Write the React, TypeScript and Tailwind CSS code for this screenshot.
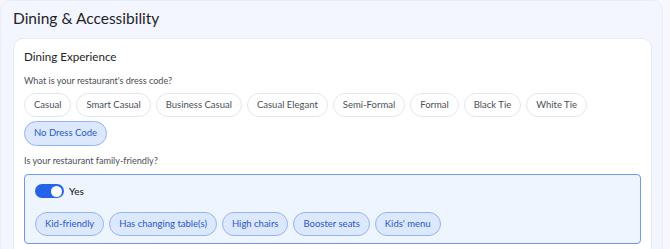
import React from "react";

const dress = ["Casual", "Smart Casual", "Business Casual", "Casual Elegant", "Semi-Formal", "Formal", "Black Tie", "White Tie"];
const family = ["Kid-friendly", "Has changing table(s)", "High chairs", "Booster seats", "Kids' menu"];

export default function App() {
  return (
    <div className="w-[670px] h-[249px] overflow-hidden bg-[#f7f7fd] font-['Lato',sans-serif]">
      <div className="w-[663px] h-[262px] rounded-[10px] bg-[#f3f6fe] border border-[#e9edf8] pl-[12px] pr-[10px] pt-[7px]">
        <h2 className="text-[15.5px] leading-[20px] text-[#1f2328]">Dining &amp; Accessibility</h2>
        <div className="mt-[10px] rounded-[10px] bg-white border border-[#e6eaf4] px-[10px] pt-[10px] pb-[12px]">
          <h3 className="text-[11.6px] leading-[16px] text-[#1f2328]">Dining Experience</h3>
          <p className="mt-[10px] text-[9.1px] leading-[12px] text-[#4b4f56]">What is your restaurant's dress code?</p>
          <div className="mt-[6px] flex flex-wrap gap-x-[5px] gap-y-[4px]">
            {dress.map((d) => (
              <span key={d} className="h-[24px] px-[9px] flex items-center rounded-full border border-[#e3e6ec] bg-white text-[9.5px] text-[#4b4f56]">{d}</span>
            ))}
            <span className="h-[25px] px-[9px] flex items-center rounded-full border border-[#93b4f4] bg-[#dce8fd] text-[9.5px] text-[#2b57c9]">No Dress Code</span>
          </div>
          <p className="mt-[9px] text-[9.1px] leading-[12px] text-[#4b4f56]">Is your restaurant family-friendly?</p>
          <div className="mt-[7px] rounded-[4px] border-[1.5px] border-[#6f98f2] bg-[#eff5ff] pl-[10px] pr-[10px] pt-[9px] pb-[7px]">
            <div className="flex items-center gap-[5px] h-[14px]">
              <span className="w-[29px] h-[14px] rounded-full bg-[#2563eb] flex items-center justify-end pr-[2px]">
                <span className="w-[11px] h-[11px] rounded-full bg-white" />
              </span>
              <span className="text-[10px] font-medium text-[#1f2328]">Yes</span>
            </div>
            <div className="mt-[14px] flex flex-wrap gap-[5px]">
              {family.map((f) => (
                <span key={f} className="h-[24px] px-[9px] flex items-center rounded-full border border-[#93b4f4] bg-[#dce8fd] text-[9.5px] text-[#2b57c9]">{f}</span>
              ))}
            </div>
          </div>
        </div>
      </div>
    </div>
  );
}
